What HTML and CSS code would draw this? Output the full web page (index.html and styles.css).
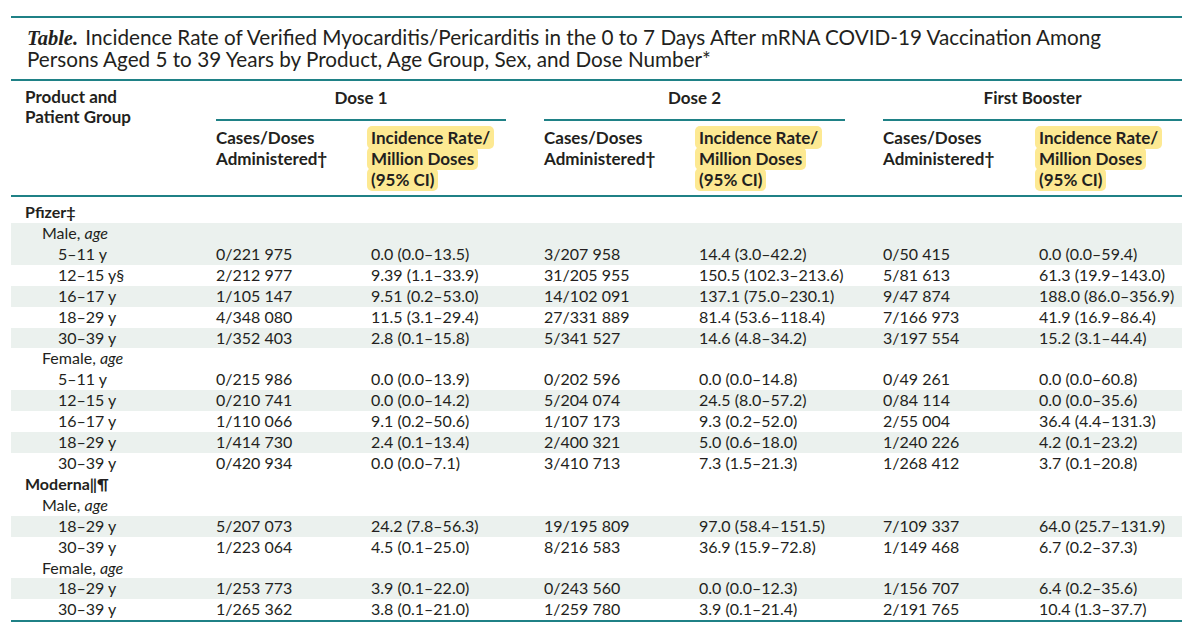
FILE: index.html
```html
<!DOCTYPE html>
<html lang="en">
<head>
<meta charset="utf-8">
<title>Table</title>
<link rel="stylesheet" href="styles.css">
</head>
<body>
<div class="figure">
  <div class="title"><div class="tline"><span class="tlabel">Table.</span> Incidence Rate of Verified Myocarditis/Pericarditis in the 0 to 7 Days After mRNA COVID-19 Vaccination Among</div><div class="tline">Persons Aged 5 to 39 Years by Product, Age Group, Sex, and Dose Number*</div></div>
  <table class="data">
    <colgroup>
      <col class="c0"><col class="c1"><col class="c2"><col class="c3"><col class="c4"><col class="c5"><col class="c6">
    </colgroup>
    <thead>
      <tr class="h1">
        <th class="lbl" rowspan="2">Product and<br>Patient Group</th>
        <th colspan="2" class="grp"><div class="gwrap gap"><div class="gname">Dose 1</div><div class="grule"></div></div></th>
        <th colspan="2" class="grp"><div class="gwrap gap"><div class="gname">Dose 2</div><div class="grule"></div></div></th>
        <th colspan="2" class="grp"><div class="gwrap"><div class="gname">First Booster</div><div class="grule"></div></div></th>
      </tr>
      <tr class="h2">
        <th>Cases/Doses<br>Administered†</th>
        <th><span class="hl">Incidence Rate/<br>Million Doses<br>(95% CI)</span></th>
        <th>Cases/Doses<br>Administered†</th>
        <th><span class="hl">Incidence Rate/<br>Million Doses<br>(95% CI)</span></th>
        <th>Cases/Doses<br>Administered†</th>
        <th><span class="hl">Incidence Rate/<br>Million Doses<br>(95% CI)</span></th>
      </tr>
    </thead>
    <tbody>
      <tr class="prod first"><td class="l1">Pfizer‡</td><td></td><td></td><td></td><td></td><td></td><td></td></tr>
      <tr class="s"><td class="l2">Male, <i>age</i></td><td></td><td></td><td></td><td></td><td></td><td></td></tr>
      <tr class="s"><td class="l3">5–11 y</td><td>0/221 975</td><td>0.0 (0.0–13.5)</td><td>3/207 958</td><td>14.4 (3.0–42.2)</td><td>0/50 415</td><td>0.0 (0.0–59.4)</td></tr>
      <tr><td class="l3">12–15 y§</td><td>2/212 977</td><td>9.39 (1.1–33.9)</td><td>31/205 955</td><td>150.5 (102.3–213.6)</td><td>5/81 613</td><td>61.3 (19.9–143.0)</td></tr>
      <tr class="s"><td class="l3">16–17 y</td><td>1/105 147</td><td>9.51 (0.2–53.0)</td><td>14/102 091</td><td>137.1 (75.0–230.1)</td><td>9/47 874</td><td>188.0 (86.0–356.9)</td></tr>
      <tr><td class="l3">18–29 y</td><td>4/348 080</td><td>11.5 (3.1–29.4)</td><td>27/331 889</td><td>81.4 (53.6–118.4)</td><td>7/166 973</td><td>41.9 (16.9–86.4)</td></tr>
      <tr class="s"><td class="l3">30–39 y</td><td>1/352 403</td><td>2.8 (0.1–15.8)</td><td>5/341 527</td><td>14.6 (4.8–34.2)</td><td>3/197 554</td><td>15.2 (3.1–44.4)</td></tr>
      <tr><td class="l2">Female, <i>age</i></td><td></td><td></td><td></td><td></td><td></td><td></td></tr>
      <tr><td class="l3">5–11 y</td><td>0/215 986</td><td>0.0 (0.0–13.9)</td><td>0/202 596</td><td>0.0 (0.0–14.8)</td><td>0/49 261</td><td>0.0 (0.0–60.8)</td></tr>
      <tr class="s"><td class="l3">12–15 y</td><td>0/210 741</td><td>0.0 (0.0–14.2)</td><td>5/204 074</td><td>24.5 (8.0–57.2)</td><td>0/84 114</td><td>0.0 (0.0–35.6)</td></tr>
      <tr><td class="l3">16–17 y</td><td>1/110 066</td><td>9.1 (0.2–50.6)</td><td>1/107 173</td><td>9.3 (0.2–52.0)</td><td>2/55 004</td><td>36.4 (4.4–131.3)</td></tr>
      <tr class="s"><td class="l3">18–29 y</td><td>1/414 730</td><td>2.4 (0.1–13.4)</td><td>2/400 321</td><td>5.0 (0.6–18.0)</td><td>1/240 226</td><td>4.2 (0.1–23.2)</td></tr>
      <tr><td class="l3">30–39 y</td><td>0/420 934</td><td>0.0 (0.0–7.1)</td><td>3/410 713</td><td>7.3 (1.5–21.3)</td><td>1/268 412</td><td>3.7 (0.1–20.8)</td></tr>
      <tr class="prod"><td class="l1">Moderna‖¶</td><td></td><td></td><td></td><td></td><td></td><td></td></tr>
      <tr><td class="l2">Male, <i>age</i></td><td></td><td></td><td></td><td></td><td></td><td></td></tr>
      <tr class="s"><td class="l3">18–29 y</td><td>5/207 073</td><td>24.2 (7.8–56.3)</td><td>19/195 809</td><td>97.0 (58.4–151.5)</td><td>7/109 337</td><td>64.0 (25.7–131.9)</td></tr>
      <tr><td class="l3">30–39 y</td><td>1/223 064</td><td>4.5 (0.1–25.0)</td><td>8/216 583</td><td>36.9 (15.9–72.8)</td><td>1/149 468</td><td>6.7 (0.2–37.3)</td></tr>
      <tr><td class="l2">Female, <i>age</i></td><td></td><td></td><td></td><td></td><td></td><td></td></tr>
      <tr class="s"><td class="l3">18–29 y</td><td>1/253 773</td><td>3.9 (0.1–22.0)</td><td>0/243 560</td><td>0.0 (0.0–12.3)</td><td>1/156 707</td><td>6.4 (0.2–35.6)</td></tr>
      <tr><td class="l3">30–39 y</td><td>1/265 362</td><td>3.8 (0.1–21.0)</td><td>1/259 780</td><td>3.9 (0.1–21.4)</td><td>2/191 765</td><td>10.4 (1.3–37.7)</td></tr>
    </tbody>
  </table>
</div>
</body>
</html>
```

FILE: styles.css
```css
html, body {
  margin: 0;
  padding: 0;
  background: #ffffff;
}

body {
  font-family: "Lato", "Open Sans", sans-serif;
  color: #231f20;
}

.figure {
  width: 1171px;
  margin: 16px 0 0 11px;
}

.title {
  border-top: 2px solid #1f8186;
  border-bottom: 2px solid #1f8186;
  padding: 9px 0 9px 16px;
  font-size: 20.7px;
  color: #231f20;
}

.tline {
  height: 21.5px;
  line-height: 21.5px;
  white-space: nowrap;
}

.tlabel {
  font-family: "Liberation Serif", "DejaVu Serif", serif;
  font-style: italic;
  font-weight: 700;
  font-size: 20.5px;
  margin-right: 2px;
}

.data {
  width: 1171px;
  table-layout: fixed;
  border-collapse: separate;
  border-spacing: 0;
  font-size: 16px;
  border-bottom: 2px solid #1f8186;
}

.c0 { width: 205px; }
.c1 { width: 155px; }
.c2 { width: 173px; }
.c3 { width: 155px; }
.c4 { width: 184px; }
.c5 { width: 156px; }
.c6 { width: 143px; }

.data th {
  font-size: 17px;
  font-weight: 700;
  text-align: left;
  vertical-align: top;
  padding: 0;
  line-height: 21px;
  white-space: nowrap;
}

.h1 th {
  padding-top: 5.5px;
}

.h1 th.lbl {
  padding-left: 14px;
  line-height: 20.5px;
  border-bottom: 2px solid #1f8186;
}

.gwrap {
  display: flex;
  flex-direction: column;
}

.gwrap.gap {
  margin-right: 38px;
}

.gname {
  text-align: center;
}

.grule {
  height: 2px;
  background: #1f8186;
  margin-top: 11px;
}

.h2 th {
  padding-top: 6.5px;
  padding-bottom: 4.5px;
  border-bottom: 2px solid #1f8186;
}

.hl {
  background: #fde992;
  border-radius: 5px;
  padding: 1px 4px;
  margin-left: -4px;
  -webkit-box-decoration-break: clone;
  box-decoration-break: clone;
}

.data td {
  padding: 0;
  height: 20.9px;
  line-height: 20.9px;
  white-space: nowrap;
  vertical-align: bottom;
}

.data tr.s td {
  background: #ebf1ee;
}

.data tr.first td {
  height: 26.5px;
}

.l1 {
  font-weight: 700;
  padding-left: 14px !important;
}

.l2 {
  padding-left: 31px !important;
}

.l3 {
  padding-left: 47px !important;
}

.l2 i {
  font-style: italic;
}
```
